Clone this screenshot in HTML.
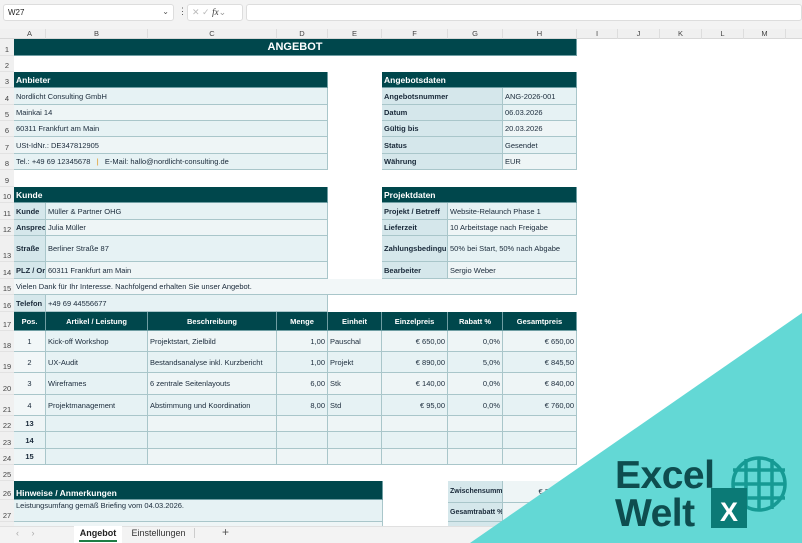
<!DOCTYPE html>
<html><head><meta charset="utf-8"><style>
*{margin:0;padding:0;box-sizing:border-box}
body{width:802px;height:543px;overflow:hidden;background:#fff;font-family:"Liberation Sans",sans-serif;position:relative;font-size:7.5px;color:#222}
.a{position:absolute}
.c{position:absolute;border-right:1px solid #a9c6ca;border-bottom:1px solid #a9c6ca;background:#eef5f6;padding:0 2px;white-space:nowrap;overflow:hidden;display:flex;align-items:center;color:#1a2a3a}
.l{background:#d5e7eb;font-weight:bold}
.d{background:#e6f2f4}
.h{background:#00474c;color:#fff;font-weight:bold;font-size:8.5px;border-color:#6f9ea3}
.hc{justify-content:center}
.r{justify-content:flex-end}
.ch{position:absolute;top:29px;height:10px;font-size:7.5px;color:#444;text-align:center;border-right:1px solid #ddd;line-height:10px}
.rh{position:absolute;left:0;width:14px;font-size:7.5px;color:#444;text-align:center;display:flex;align-items:flex-end;justify-content:center;padding-bottom:1px;border-bottom:1px solid #e2e2e2}
.logo{font-family:"Liberation Sans",sans-serif;font-weight:bold;font-size:39px;fill:#0e4d4f;letter-spacing:-0.5px}
</style></head><body>
<div class="a" style="left:0;top:0;width:802px;height:29px;background:#f3f3f3"></div>
<div class="a" style="left:3px;top:4px;width:171px;height:17px;background:#fff;border:1px solid #ddd;border-radius:3px;font-size:8px;padding:3px 4px">W27<span style="position:absolute;right:4px;top:2px;color:#555">⌄</span></div>
<div class="a" style="left:178px;top:6px;color:#555;font-size:9px">⋮</div>
<div class="a" style="left:187px;top:4px;width:56px;height:17px;background:#fff;border:1px solid #ddd;border-radius:3px;font-size:9px;color:#bbb;padding:2px 4px">✕ ✓ <i style="color:#333;font-family:'Liberation Serif',serif">fx</i><span style="color:#999">⌄</span></div>
<div class="a" style="left:246px;top:4px;width:556px;height:17px;background:#fff;border:1px solid #ddd;border-radius:3px"></div>
<div class="a" style="left:0;top:29px;width:802px;height:10px;background:#f0f0f0;border-bottom:1px solid #d8d8d8"></div>
<div class="a" style="left:0;top:39px;width:14px;height:487px;background:#f0f0f0"></div>
<div class="ch" style="left:14px;width:32px">A</div><div class="ch" style="left:46px;width:102px">B</div><div class="ch" style="left:148px;width:129px">C</div><div class="ch" style="left:277px;width:51px">D</div><div class="ch" style="left:328px;width:54px">E</div><div class="ch" style="left:382px;width:66px">F</div><div class="ch" style="left:448px;width:55px">G</div><div class="ch" style="left:503px;width:74px">H</div><div class="ch" style="left:577px;width:41px">I</div><div class="ch" style="left:618px;width:42px">J</div><div class="ch" style="left:660px;width:42px">K</div><div class="ch" style="left:702px;width:42px">L</div><div class="ch" style="left:744px;width:42px">M</div>
<div class="rh" style="top:39px;height:17px">1</div><div class="rh" style="top:56px;height:16px">2</div><div class="rh" style="top:72px;height:16px">3</div><div class="rh" style="top:88px;height:17px">4</div><div class="rh" style="top:105px;height:16px">5</div><div class="rh" style="top:121px;height:16px">6</div><div class="rh" style="top:137px;height:17px">7</div><div class="rh" style="top:154px;height:16px">8</div><div class="rh" style="top:170px;height:17px">9</div><div class="rh" style="top:187px;height:16px">10</div><div class="rh" style="top:203px;height:17px">11</div><div class="rh" style="top:220px;height:16px">12</div><div class="rh" style="top:236px;height:26px">13</div><div class="rh" style="top:262px;height:17px">14</div><div class="rh" style="top:279px;height:16px">15</div><div class="rh" style="top:295px;height:17px">16</div><div class="rh" style="top:312px;height:19px">17</div><div class="rh" style="top:331px;height:21px">18</div><div class="rh" style="top:352px;height:21px">19</div><div class="rh" style="top:373px;height:22px">20</div><div class="rh" style="top:395px;height:21px">21</div><div class="rh" style="top:416px;height:16px">22</div><div class="rh" style="top:432px;height:17px">23</div><div class="rh" style="top:449px;height:16px">24</div><div class="rh" style="top:465px;height:16px">25</div><div class="rh" style="top:481px;height:19px">26</div><div class="rh" style="top:500px;height:22px">27</div>

<div class="c h hc" style="left:14px;top:39px;width:563px;height:17px;font-size:11px">ANGEBOT</div>
<div class="c h" style="left:14px;top:72px;width:314px;height:16px">Anbieter</div>
<div class="c d" style="left:14px;top:88px;width:314px;height:17px">Nordlicht Consulting GmbH</div>
<div class="c" style="left:14px;top:105px;width:314px;height:16px">Mainkai 14</div>
<div class="c d" style="left:14px;top:121px;width:314px;height:16px">60311 Frankfurt am Main</div>
<div class="c" style="left:14px;top:137px;width:314px;height:17px">USt-IdNr.: DE347812905</div>
<div class="c d" style="left:14px;top:154px;width:314px;height:16px">Tel.: +49 69 12345678 &nbsp;&nbsp;<span style="color:#e08a00">|</span>&nbsp;&nbsp; E-Mail: hallo@nordlicht-consulting.de</div>
<div class="c h" style="left:382px;top:72px;width:195px;height:16px">Angebotsdaten</div>
<div class="c l" style="left:382px;top:88px;width:121px;height:17px">Angebotsnummer</div><div class="c d" style="left:503px;top:88px;width:74px;height:17px">ANG-2026-001</div>
<div class="c l" style="left:382px;top:105px;width:121px;height:16px">Datum</div><div class="c d" style="left:503px;top:105px;width:74px;height:16px">06.03.2026</div>
<div class="c l" style="left:382px;top:121px;width:121px;height:16px">Gültig bis</div><div class="c" style="left:503px;top:121px;width:74px;height:16px">20.03.2026</div>
<div class="c l" style="left:382px;top:137px;width:121px;height:17px">Status</div><div class="c d" style="left:503px;top:137px;width:74px;height:17px">Gesendet</div>
<div class="c l" style="left:382px;top:154px;width:121px;height:16px">Währung</div><div class="c" style="left:503px;top:154px;width:74px;height:16px">EUR</div>
<div class="c h" style="left:14px;top:187px;width:314px;height:16px">Kunde</div>
<div class="c l" style="left:14px;top:203px;width:32px;height:17px">Kunde</div><div class="c d" style="left:46px;top:203px;width:282px;height:17px">Müller &amp; Partner OHG</div>
<div class="c l" style="left:14px;top:220px;width:32px;height:16px">Ansprech</div><div class="c" style="left:46px;top:220px;width:282px;height:16px">Julia Müller</div>
<div class="c l" style="left:14px;top:236px;width:32px;height:26px">Straße</div><div class="c d" style="left:46px;top:236px;width:282px;height:26px">Berliner Straße 87</div>
<div class="c l" style="left:14px;top:262px;width:32px;height:17px">PLZ / Ort</div><div class="c" style="left:46px;top:262px;width:282px;height:17px">60311 Frankfurt am Main</div>
<div class="c h" style="left:382px;top:187px;width:195px;height:16px">Projektdaten</div>
<div class="c l" style="left:382px;top:203px;width:66px;height:17px">Projekt / Betreff</div><div class="c d" style="left:448px;top:203px;width:129px;height:17px">Website-Relaunch Phase 1</div>
<div class="c l" style="left:382px;top:220px;width:66px;height:16px">Lieferzeit</div><div class="c" style="left:448px;top:220px;width:129px;height:16px">10 Arbeitstage nach Freigabe</div>
<div class="c l" style="left:382px;top:236px;width:66px;height:26px">Zahlungsbedingungen</div><div class="c d" style="left:448px;top:236px;width:129px;height:26px">50% bei Start, 50% nach Abgabe</div>
<div class="c l" style="left:382px;top:262px;width:66px;height:17px">Bearbeiter</div><div class="c" style="left:448px;top:262px;width:129px;height:17px">Sergio Weber</div>
<div class="c" style="left:14px;top:279px;width:563px;height:16px;background:#f2f7f8">Vielen Dank für Ihr Interesse. Nachfolgend erhalten Sie unser Angebot.</div>
<div class="c l" style="left:14px;top:295px;width:32px;height:17px">Telefon</div><div class="c d" style="left:46px;top:295px;width:282px;height:17px">+49 69 44556677</div>
<div class="c h hc" style="left:14px;top:312px;width:32px;height:19px;font-size:7.5px">Pos.</div>
<div class="c h hc" style="left:46px;top:312px;width:102px;height:19px;font-size:7.5px">Artikel / Leistung</div>
<div class="c h hc" style="left:148px;top:312px;width:129px;height:19px;font-size:7.5px">Beschreibung</div>
<div class="c h hc" style="left:277px;top:312px;width:51px;height:19px;font-size:7.5px">Menge</div>
<div class="c h hc" style="left:328px;top:312px;width:54px;height:19px;font-size:7.5px">Einheit</div>
<div class="c h hc" style="left:382px;top:312px;width:66px;height:19px;font-size:7.5px">Einzelpreis</div>
<div class="c h hc" style="left:448px;top:312px;width:55px;height:19px;font-size:7.5px">Rabatt %</div>
<div class="c h hc" style="left:503px;top:312px;width:74px;height:19px;font-size:7.5px">Gesamtpreis</div>
<div class="c hc" style="left:14px;top:331px;width:32px;height:21px;background:#f2f7f8">1</div><div class="c d" style="left:46px;top:331px;width:102px;height:21px">Kick-off Workshop</div><div class="c" style="left:148px;top:331px;width:129px;height:21px">Projektstart, Zielbild</div><div class="c r" style="left:277px;top:331px;width:51px;height:21px">1,00</div><div class="c" style="left:328px;top:331px;width:54px;height:21px">Pauschal</div><div class="c r" style="left:382px;top:331px;width:66px;height:21px">€ 650,00</div><div class="c r" style="left:448px;top:331px;width:55px;height:21px">0,0%</div><div class="c r" style="left:503px;top:331px;width:74px;height:21px">€ 650,00</div>
<div class="c hc" style="left:14px;top:352px;width:32px;height:21px;background:#f2f7f8">2</div><div class="c d" style="left:46px;top:352px;width:102px;height:21px">UX-Audit</div><div class="c d" style="left:148px;top:352px;width:129px;height:21px">Bestandsanalyse inkl. Kurzbericht</div><div class="c r d" style="left:277px;top:352px;width:51px;height:21px">1,00</div><div class="c d" style="left:328px;top:352px;width:54px;height:21px">Projekt</div><div class="c r d" style="left:382px;top:352px;width:66px;height:21px">€ 890,00</div><div class="c r d" style="left:448px;top:352px;width:55px;height:21px">5,0%</div><div class="c r d" style="left:503px;top:352px;width:74px;height:21px">€ 845,50</div>
<div class="c hc" style="left:14px;top:373px;width:32px;height:22px;background:#f2f7f8">3</div><div class="c d" style="left:46px;top:373px;width:102px;height:22px">Wireframes</div><div class="c" style="left:148px;top:373px;width:129px;height:22px">6 zentrale Seitenlayouts</div><div class="c r" style="left:277px;top:373px;width:51px;height:22px">6,00</div><div class="c" style="left:328px;top:373px;width:54px;height:22px">Stk</div><div class="c r" style="left:382px;top:373px;width:66px;height:22px">€ 140,00</div><div class="c r" style="left:448px;top:373px;width:55px;height:22px">0,0%</div><div class="c r" style="left:503px;top:373px;width:74px;height:22px">€ 840,00</div>
<div class="c hc" style="left:14px;top:395px;width:32px;height:21px;background:#f2f7f8">4</div><div class="c d" style="left:46px;top:395px;width:102px;height:21px">Projektmanagement</div><div class="c d" style="left:148px;top:395px;width:129px;height:21px">Abstimmung und Koordination</div><div class="c r d" style="left:277px;top:395px;width:51px;height:21px">8,00</div><div class="c d" style="left:328px;top:395px;width:54px;height:21px">Std</div><div class="c r d" style="left:382px;top:395px;width:66px;height:21px">€ 95,00</div><div class="c r d" style="left:448px;top:395px;width:55px;height:21px">0,0%</div><div class="c r d" style="left:503px;top:395px;width:74px;height:21px">€ 760,00</div>
<div class="c hc l" style="left:14px;top:416px;width:32px;height:16px;background:#eef5f6">13</div><div class="c d" style="left:46px;top:416px;width:102px;height:16px"></div><div class="c" style="left:148px;top:416px;width:129px;height:16px"></div><div class="c" style="left:277px;top:416px;width:51px;height:16px"></div><div class="c" style="left:328px;top:416px;width:54px;height:16px"></div><div class="c" style="left:382px;top:416px;width:66px;height:16px"></div><div class="c" style="left:448px;top:416px;width:55px;height:16px"></div><div class="c" style="left:503px;top:416px;width:74px;height:16px"></div>
<div class="c hc l" style="left:14px;top:432px;width:32px;height:17px;background:#e6f2f4">14</div><div class="c d" style="left:46px;top:432px;width:102px;height:17px"></div><div class="c d" style="left:148px;top:432px;width:129px;height:17px"></div><div class="c d" style="left:277px;top:432px;width:51px;height:17px"></div><div class="c d" style="left:328px;top:432px;width:54px;height:17px"></div><div class="c d" style="left:382px;top:432px;width:66px;height:17px"></div><div class="c d" style="left:448px;top:432px;width:55px;height:17px"></div><div class="c d" style="left:503px;top:432px;width:74px;height:17px"></div>
<div class="c hc l" style="left:14px;top:449px;width:32px;height:16px;background:#eef5f6">15</div><div class="c d" style="left:46px;top:449px;width:102px;height:16px"></div><div class="c" style="left:148px;top:449px;width:129px;height:16px"></div><div class="c" style="left:277px;top:449px;width:51px;height:16px"></div><div class="c" style="left:328px;top:449px;width:54px;height:16px"></div><div class="c" style="left:382px;top:449px;width:66px;height:16px"></div><div class="c" style="left:448px;top:449px;width:55px;height:16px"></div><div class="c" style="left:503px;top:449px;width:74px;height:16px"></div>
<div class="c h" style="left:14px;top:481px;width:369px;height:19px;align-items:flex-end;padding-bottom:1px">Hinweise / Anmerkungen</div>
<div class="c d" style="left:14px;top:500px;width:369px;height:22px;align-items:flex-start;padding-top:1px">Leistungsumfang gemäß Briefing vom 04.03.2026.</div>
<div class="c" style="left:14px;top:522px;width:369px;height:10px"></div>
<div class="c l" style="left:448px;top:481px;width:55px;height:22px;font-size:7px">Zwischensumme</div><div class="c r" style="left:503px;top:481px;width:74px;height:22px">€ 3.095,50</div>
<div class="c l" style="left:448px;top:503px;width:55px;height:19px;font-size:7px">Gesamtrabatt %</div><div class="c" style="left:503px;top:503px;width:74px;height:19px"></div>
<div class="c l" style="left:448px;top:522px;width:55px;height:10px"></div>
<div class="a" style="left:0;top:526px;width:802px;height:17px;background:#f3f3f3;border-top:1px solid #e0e0e0"></div>
<div class="a" style="left:16px;top:528px;font-size:9px;color:#aaa">‹&nbsp;&nbsp;&nbsp;&nbsp;&nbsp;›</div>
<div class="a" style="left:74px;top:526px;width:48px;height:17px;background:#fff;font-size:9px;font-weight:bold;color:#222;text-align:center;padding-top:2px">Angebot<div style="position:absolute;left:5px;right:5px;bottom:1px;height:2px;background:#1e7d45"></div></div>
<div class="a" style="left:123px;top:528px;width:72px;font-size:9px;color:#333;text-align:center;border-right:1px solid #ccc">Einstellungen</div>
<div class="a" style="left:222px;top:525px;font-size:12px;color:#555">+</div>
<svg class="a" style="left:0;top:0" width="802" height="543">
<polygon points="802,313 802,543 470,543" fill="#63d8d5"/>
<g fill="none" stroke="#169a94" stroke-width="3.5">
<circle cx="759" cy="484" r="26"/>
<line x1="733" y1="470" x2="785" y2="470"/><line x1="733" y1="484" x2="785" y2="484"/><line x1="733" y1="498" x2="785" y2="498"/>
<line x1="746" y1="459" x2="746" y2="509"/><line x1="759" y1="458" x2="759" y2="510"/><line x1="772" y1="459" x2="772" y2="509"/>
</g>
<rect x="711" y="488" width="36" height="40" fill="#0b7a76"/>
<text x="729" y="521" text-anchor="middle" style="font-family:'Liberation Sans',sans-serif;font-weight:bold;font-size:27px;fill:#fff">X</text>
<text x="615" y="488" class="logo">Excel</text>
<text x="615" y="526" class="logo">Welt</text>
</svg>
</body></html>
